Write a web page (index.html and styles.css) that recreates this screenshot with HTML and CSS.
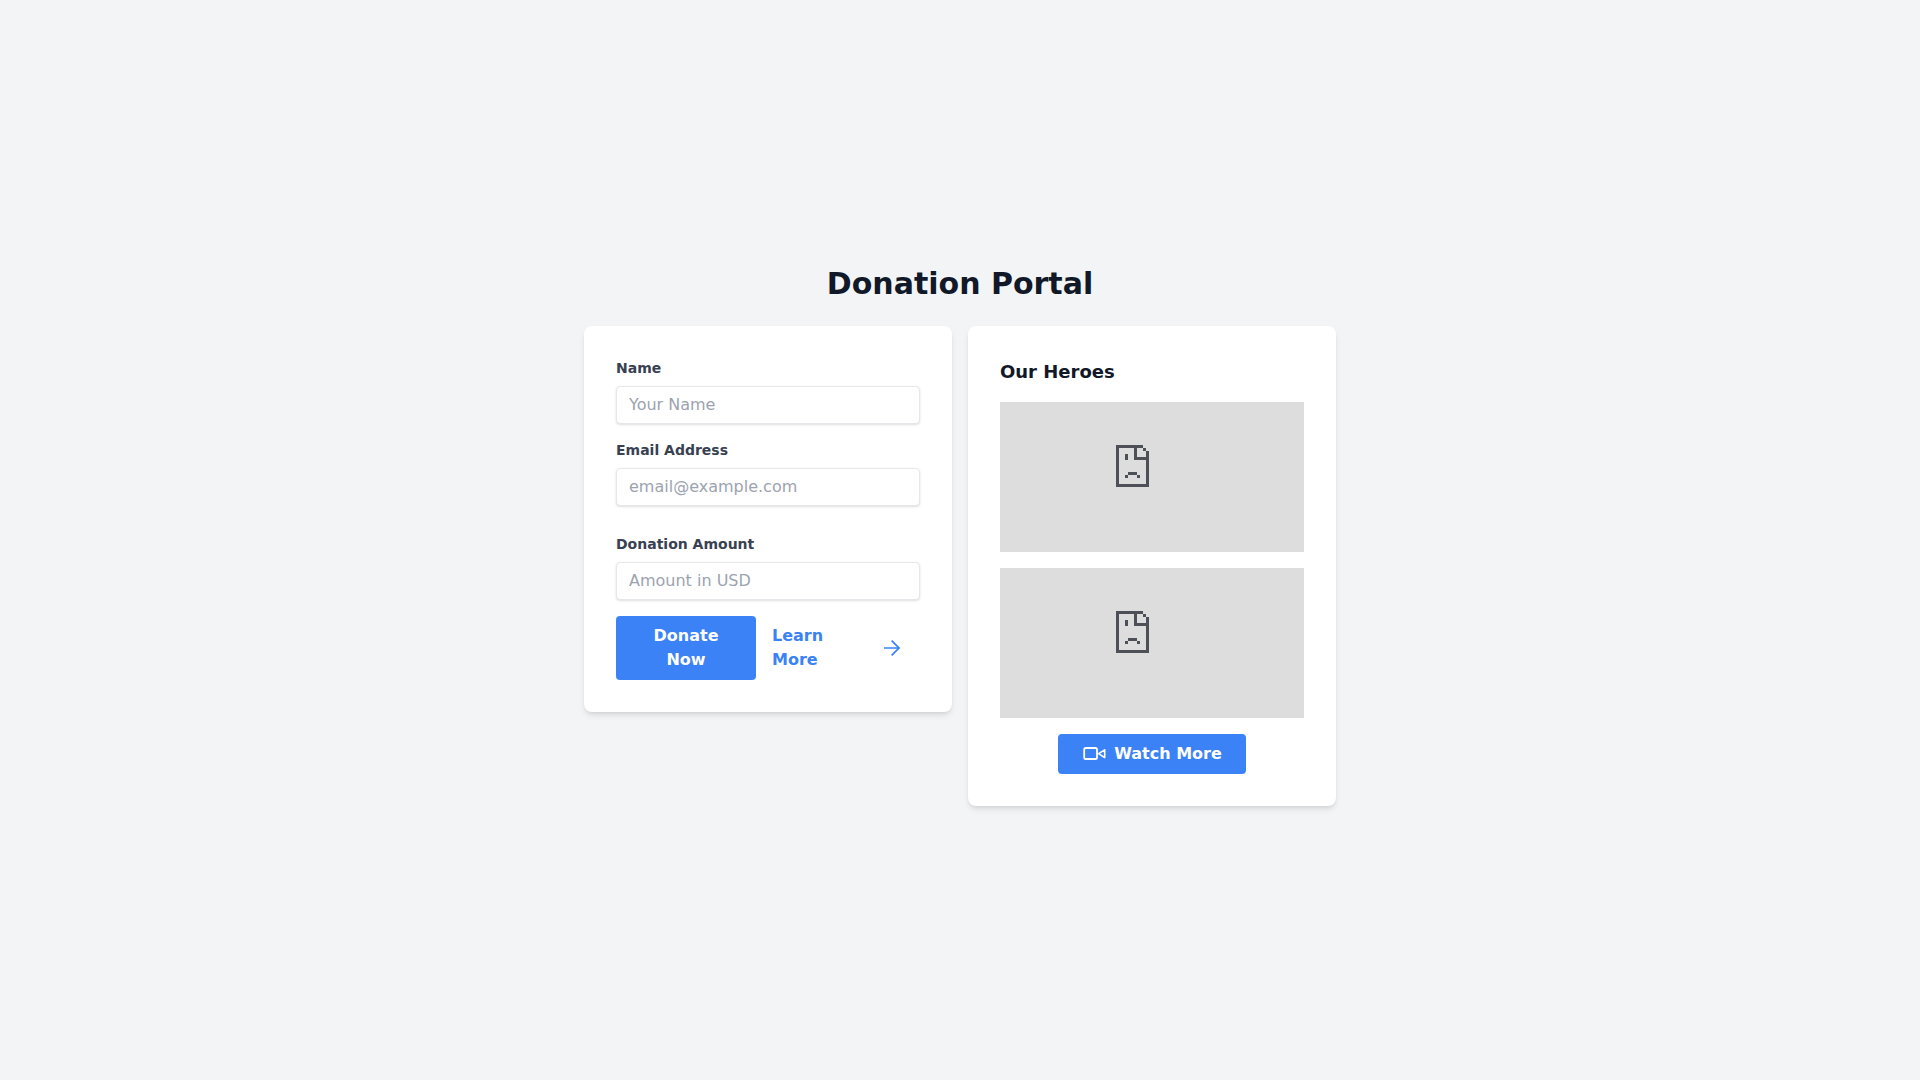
FILE: index.html
```html
<!DOCTYPE html>
<html lang="en">
<head>
    <meta charset="UTF-8">
    <meta name="viewport" content="width=device-width, initial-scale=1.0">
    <title>Donation Portal</title>
    <link rel="stylesheet" href="styles.css">
</head>
<body>

<div class="portal">
    <h1>Donation Portal</h1>
    <div class="columns">
        <form class="card">
            <div class="field">
                <label for="name">Name</label>
                <input type="text" id="name" placeholder="Your Name">
            </div>
            <div class="field">
                <label for="email">Email Address</label>
                <input type="email" id="email" placeholder="email@example.com">
            </div>
            <div class="field field-amount">
                <label for="amount">Donation Amount</label>
                <input type="text" id="amount" placeholder="Amount in USD">
            </div>
            <div class="actions">
                <button type="button" class="btn btn-donate">Donate Now</button>
                <a href="#" class="learn-more">
                    <span class="learn-text">Learn More</span>
                    <svg class="arrow" viewBox="0 0 16 16" fill="none" stroke="currentColor" stroke-width="1.7">
                        <path d="M0 8H15M7.6 .7 15 8l-7.4 7.3"/>
                    </svg>
                </a>
            </div>
        </form>

        <section class="card">
            <h2>Our Heroes</h2>
            <div class="hero-img">
                <svg class="broken" viewBox="0 0 11 14" fill="#4d5057" shape-rendering="crispEdges">
                    <path d="M0 0H9V1H10V2H11V14H0ZM1 1V13H10V5H6V1ZM7 1V4H10V2H9V1ZM3 3H4V5H3ZM4 9H7V10H4ZM3 10H4V11H3ZM7 10H8V11H7Z" fill-rule="evenodd"/>
                </svg>
            </div>
            <div class="hero-img">
                <svg class="broken" viewBox="0 0 11 14" fill="#4d5057" shape-rendering="crispEdges">
                    <path d="M0 0H9V1H10V2H11V14H0ZM1 1V13H10V5H6V1ZM7 1V4H10V2H9V1ZM3 3H4V5H3ZM4 9H7V10H4ZM3 10H4V11H3ZM7 10H8V11H7Z" fill-rule="evenodd"/>
                </svg>
            </div>
            <div class="watch-row">
                <button type="button" class="btn btn-watch">
                    <svg class="video" viewBox="0 0 24 24" fill="none" stroke="currentColor" stroke-width="1.8" stroke-linejoin="round">
                        <rect x="2.2" y="6" width="12.8" height="11" rx="1.6"/>
                        <path d="M22.7 7.8V15.6L16.6 11.7Z" stroke-width="1.6"/>
                    </svg>
                    Watch More
                </button>
            </div>
        </section>
    </div>
</div>

</body>
</html>
```

FILE: styles.css
```css
* {
    box-sizing: border-box;
}
body {
    font-family: "DejaVu Sans", sans-serif;
    background-color: #f3f4f6;
    display: flex;
    justify-content: center;
    align-items: center;
    min-height: 100vh;
    margin: 0;
}
.portal {
    width: 752px;
    margin-bottom: 8px;
}
h1 {
    font-size: 30px;
    line-height: 36px;
    font-weight: 700;
    color: #111827;
    text-align: center;
    margin: 0 0 24px;
}
.columns {
    display: grid;
    grid-template-columns: 1fr 1fr;
    gap: 16px;
    align-items: start;
}
.card {
    background-color: #fff;
    padding: 32px;
    border-radius: 8px;
    box-shadow: 0 4px 6px -1px rgba(0, 0, 0, 0.1), 0 2px 4px -2px rgba(0, 0, 0, 0.1);
}
.field {
    margin-bottom: 16px;
}
.field-amount {
    margin-top: 28px;
}
.field label {
    display: block;
    font-size: 14px;
    line-height: 20px;
    font-weight: 700;
    color: #374151;
    margin-bottom: 8px;
}
.field input {
    display: block;
    width: 100%;
    padding: 8px 12px;
    font-family: inherit;
    font-size: 16px;
    line-height: 20px;
    color: #374151;
    border: 1px solid #e5e7eb;
    border-radius: 4px;
    box-shadow: 0 1px 3px rgba(0, 0, 0, 0.1), 0 1px 2px -1px rgba(0, 0, 0, 0.1);
}
.field input::placeholder {
    color: #9ca3af;
    opacity: 1;
}
.actions {
    display: flex;
    align-items: center;
    gap: 16px;
}
.btn {
    font-family: inherit;
    font-size: 16px;
    line-height: 24px;
    font-weight: 700;
    color: #fff;
    background-color: #3b82f6;
    border: none;
    border-radius: 4px;
    padding: 8px 24px;
    cursor: pointer;
}
.btn-donate {
    flex: 0 0 140px;
    width: 140px;
}
.learn-more {
    flex: 1;
    display: flex;
    align-items: center;
    justify-content: space-between;
    padding-right: 20px;
    font-size: 16px;
    line-height: 24px;
    font-weight: 700;
    color: #3b82f6;
    text-decoration: none;
}
.learn-text {
    width: min-content;
}
.arrow {
    width: 16px;
    height: 16px;
}
h2 {
    font-size: 18px;
    line-height: 28px;
    font-weight: 700;
    color: #111827;
    margin: 0 0 16px;
}
.hero-img {
    height: 150px;
    background-color: #ddd;
    margin-bottom: 16px;
    padding: 43px 0 0 116px;
}
.broken {
    display: block;
    width: 33px;
    height: 42px;
}
.watch-row {
    display: flex;
    justify-content: center;
}
.btn-watch {
    display: flex;
    align-items: center;
    gap: 8px;
}
.video {
    width: 24px;
    height: 24px;
}
```
